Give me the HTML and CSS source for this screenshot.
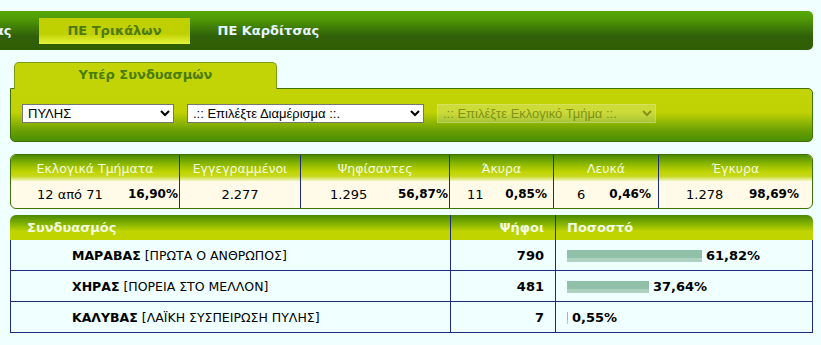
FILE: index.html
```html
<!DOCTYPE html>
<html lang="el">
<head>
  <meta charset="UTF-8">
  <title>Αποτελέσματα - ΠΕ Τρικάλων</title>
  <link rel="stylesheet" href="styles.css">
</head>
<body>
  <div class="nav">
    <a class="nav-item" href="#">ΠΕ Λαρίσας</a>
    <a class="nav-item active" href="#">ΠΕ Τρικάλων</a>
    <a class="nav-item" href="#">ΠΕ Καρδίτσας</a>
  </div>

  <div class="content">
    <div class="tabs">
      <div class="tab">Υπέρ Συνδυασμών</div>
    </div>
    <div class="panel">
      <select class="sel sel-dimos">
        <option>ΠΥΛΗΣ</option>
      </select>
      <select class="sel sel-diam">
        <option>.:: Επιλέξτε Διαμέρισμα ::.</option>
      </select>
      <select class="sel sel-tmima" disabled>
        <option>.:: Επιλέξτε Εκλογικό Τμήμα ::.</option>
      </select>
    </div>

    <table class="stats">
      <tr>
        <th class="c1">Εκλογικά Τμήματα</th>
        <th class="c2">Εγγεγραμμένοι</th>
        <th class="c3">Ψηφίσαντες</th>
        <th class="c4">Άκυρα</th>
        <th class="c5">Λευκά</th>
        <th class="c6">Έγκυρα</th>
      </tr>
      <tr>
        <td class="c1"><span class="num">12 από 71</span><b>16,90%</b></td>
        <td class="c2">2.277</td>
        <td class="c3"><span class="num">1.295</span><b>56,87%</b></td>
        <td class="c4"><span class="num">11</span><b>0,85%</b></td>
        <td class="c5"><span class="num">6</span><b>0,46%</b></td>
        <td class="c6"><span class="num">1.278</span><b>98,69%</b></td>
      </tr>
    </table>

    <table class="results">
      <tr>
        <th class="r-name">Συνδυασμός</th>
        <th class="r-votes">Ψήφοι</th>
        <th class="r-pct">Ποσοστό</th>
      </tr>
      <tr>
        <td class="r-name"><b>ΜΑΡΑΒΑΣ</b> [ΠΡΩΤΑ Ο ΑΝΘΡΩΠΟΣ]</td>
        <td class="r-votes">790</td>
        <td class="r-pct"><span class="bar" style="width: 135px"></span><b>61,82%</b></td>
      </tr>
      <tr>
        <td class="r-name"><b>ΧΗΡΑΣ</b> [ΠΟΡΕΙΑ ΣΤΟ ΜΕΛΛΟΝ]</td>
        <td class="r-votes">481</td>
        <td class="r-pct"><span class="bar" style="width: 82px"></span><b>37,64%</b></td>
      </tr>
      <tr>
        <td class="r-name"><b>ΚΑΛΥΒΑΣ</b> [ΛΑΪΚΗ ΣΥΣΠΕΙΡΩΣΗ ΠΥΛΗΣ]</td>
        <td class="r-votes">7</td>
        <td class="r-pct"><span class="bar" style="width: 1px"></span><b>0,55%</b></td>
      </tr>
    </table>
  </div>
</body>
</html>
```

FILE: styles.css
```css
* {
  box-sizing: border-box;
}
body {
  margin: 0;
  padding-top: 11px;
  background: #f0ffff;
  font-family: 'DejaVu Sans', Verdana, sans-serif;
  font-size: 12.5px;
  color: #000;
  overflow: hidden;
}

/* top navigation */
.nav {
  display: flex;
  align-items: center;
  height: 39px;
  margin-left: -101px;
  margin-right: 8px;
  border-radius: 0 5px 5px 0;
  background: linear-gradient(#57a906 0%, #4f9a05 20%, #30600a 65%, #2f5e02 100%);
}
.nav-item {
  display: block;
  height: 26px;
  line-height: 26px;
  padding: 0 28px;
  font-size: 13px;
  font-weight: bold;
  color: #e8f4ff;
  text-decoration: none;
  white-space: nowrap;
}
.nav-item.active {
  color: #4e7a12;
  background: linear-gradient(#c0d000 0%, #bfd000 60%, #e4f43c 100%);
}

.content {
  padding: 0 8px 0 10px;
}

/* tab + selection panel */
.tabs {
  display: flex;
  margin-top: 12px;
  padding-left: 4px;
}
.tab {
  width: 263px;
  height: 27px;
  padding-top: 4px;
  margin-bottom: -1px;
  text-align: center;
  font-size: 13px;
  font-weight: bold;
  color: #4a7c0a;
  background: #c2d406;
  border: 1px solid #7a9a18;
  border-bottom: none;
  border-radius: 5px 5px 0 0;
  position: relative;
  z-index: 1;
}
.panel {
  display: flex;
  gap: 13px;
  height: 54px;
  padding: 15px 11px 0;
  border: 1px solid #3f7204;
  border-radius: 0 5px 5px 5px;
  background: linear-gradient(#c2d406 0%, #c0d204 45%, #6aa004 80%, #4a8e02 100%);
}
.sel {
  height: 19px;
  font-family: 'Liberation Sans', Arial, sans-serif;
  font-size: 13px;
  padding: 0 0 0 1px;
  border: 1px solid #767676;
  border-radius: 0;
  background: #fff;
  color: #000;
}
.sel-dimos {
  width: 152px;
}
.sel-diam {
  width: 237px;
}
.sel-tmima {
  width: 219px;
  color: #6a7a20;
  background: rgba(255, 255, 255, 0.3);
  border-color: rgba(255, 255, 255, 0.3);
}

/* stats table */
.stats {
  width: 803px;
  margin-top: 12px;
  border-collapse: separate;
  border-spacing: 0;
  border: 1px solid #3f7204;
  border-radius: 6px;
  overflow: hidden;
  background: #fffbe8;
  table-layout: fixed;
}
.stats th {
  height: 26px;
  font-weight: normal;
  color: #f2fae0;
  background: linear-gradient(#4a8a00 0%, #8cb800 35%, #c0d400 65%, #c8d820 82%, #f4f6c8 100%);
  border-left: 1px solid #1c2a80;
  padding: 0;
}
.stats td {
  height: 27px;
  font-size: 13px;
  border-left: 1px solid #1c2a80;
  white-space: nowrap;
}
.stats th:first-child,
.stats td:first-child {
  border-left: none;
}
.stats td b {
  float: right;
  font-size: 12px;
}
.stats .c1 { width: 168px; }
.stats .c2 { width: 121px; }
.stats .c3 { width: 149px; }
.stats .c4 { width: 104px; }
.stats .c5 { width: 105px; }
.stats td.c1 { padding: 0 1px 0 26px; }
.stats td.c2 { text-align: center; }
.stats td.c3 { padding: 0 1px 0 29px; }
.stats td.c4 { padding: 0 6px 0 17px; }
.stats td.c5 { padding: 0 7px 0 23px; }
.stats td.c6 { padding: 0 13px 0 27px; }

/* results table */
.results {
  width: 803px;
  margin-top: 6px;
  border-collapse: separate;
  border-spacing: 0;
}
.results th {
  height: 25px;
  padding: 0 12px 0 17px;
  text-align: left;
  font-size: 13px;
  font-weight: bold;
  color: #f2fae0;
  background: linear-gradient(#4a8a00 0%, #8cb800 40%, #c0d400 65%, #c0d400 100%);
  border-left: 1px solid #1c2a80;
}
.results th:first-child {
  border-left: none;
  border-radius: 6px 0 0 0;
}
.results th:last-child {
  border-radius: 0 6px 0 0;
}
.results td {
  height: 31px;
  border-left: 1px solid #1c2a80;
  border-bottom: 1px solid #1c2a80;
}
.results td:last-child {
  border-right: 1px solid #1c2a80;
}
.results th.r-name { width: 440px; }
.results td.r-name {
  padding-left: 61px;
}
.results .r-votes {
  width: 105px;
  text-align: right;
  padding-right: 11px;
}
.results td.r-votes {
  font-size: 13px;
  font-weight: bold;
}
.results .r-pct {
  padding-left: 11px;
}
.bar {
  display: inline-block;
  vertical-align: middle;
  height: 12px;
  margin-right: 4px;
  background: linear-gradient(#90c0a8 0%, #90c0a8 66%, #c8e0d4 75%, #90c0a8 84%, #d0e6da 92%, #90c0a8 100%);
}
.results td.r-pct b {
  font-size: 13px;
  vertical-align: middle;
}
```
